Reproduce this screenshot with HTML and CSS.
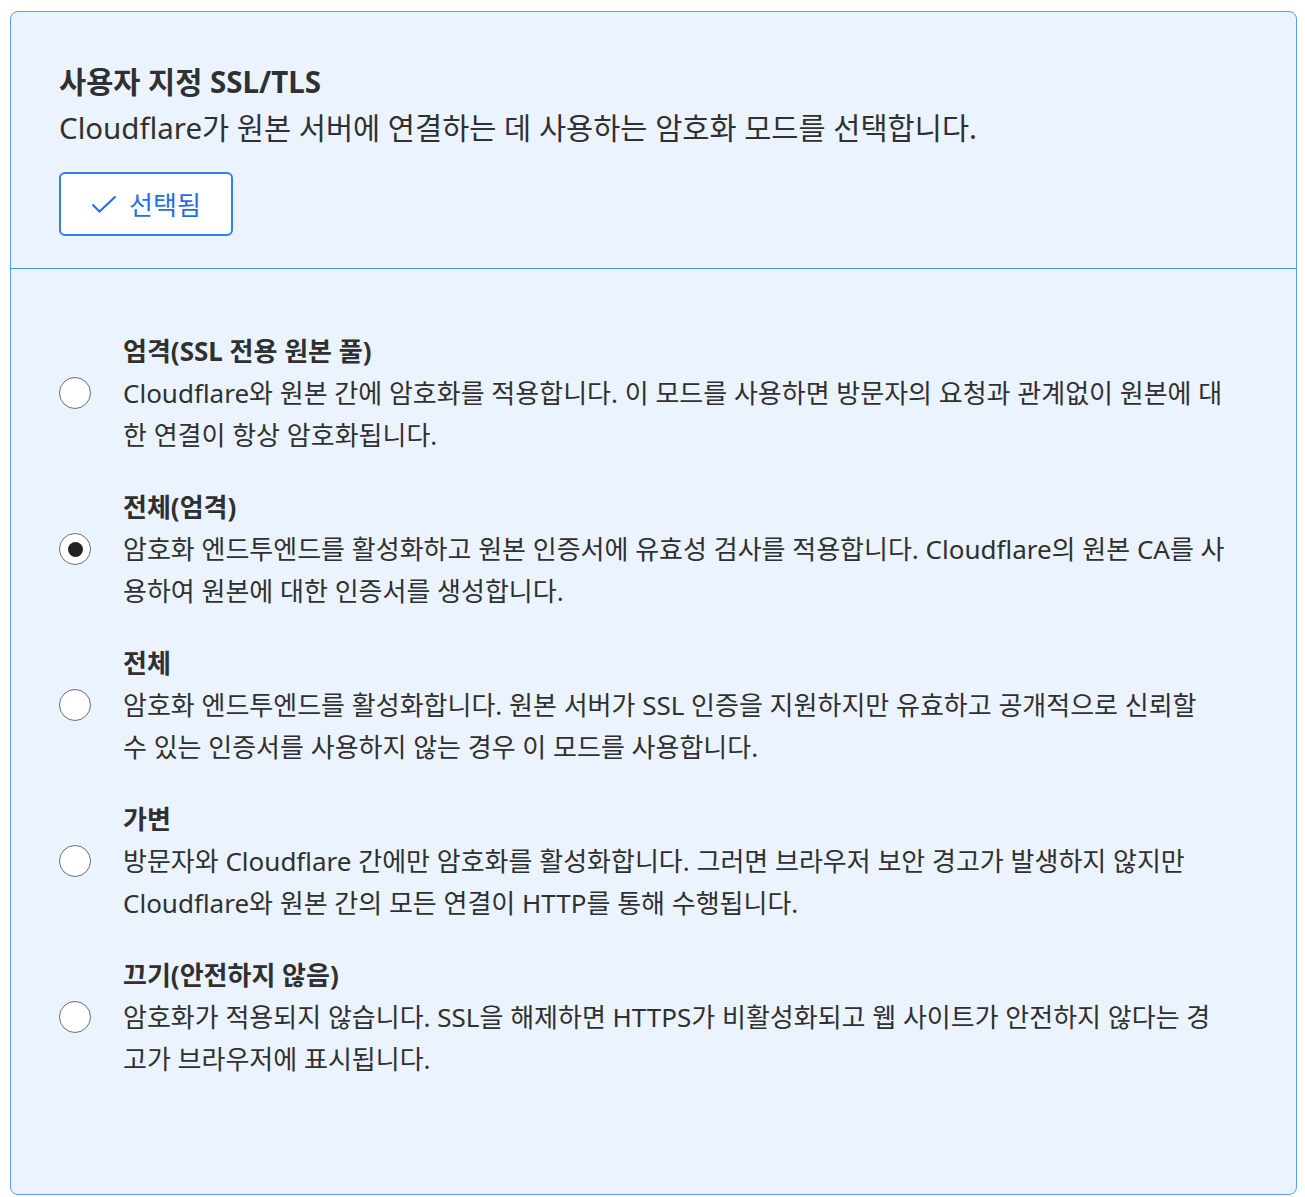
FILE: index.html
```html
<!DOCTYPE html>
<html lang="ko">
<head>
<meta charset="utf-8">
<link rel="stylesheet" href="styles.css">
</head>
<body>
<div class="card">
  <div class="head">
    <h2 class="title">사용자 지정 SSL/TLS</h2>
    <p class="desc">Cloudflare가 원본 서버에 연결하는 데 사용하는 암호화 모드를 선택합니다.</p>
    <button class="btn">
      <svg class="check" viewBox="0 0 26 18" width="26" height="18"><path d="M1.5 9.5 L8.5 16.5 L24.5 1.5" fill="none" stroke="currentColor" stroke-width="2"/></svg>
      <span>선택됨</span>
    </button>
  </div>
  <div class="list">
    <label class="opt">
      <span class="radio"></span>
      <span class="txt">
        <span class="otitle">엄격(SSL 전용 원본 풀)</span>
        <span class="odesc">Cloudflare와 원본 간에 암호화를 적용합니다. 이 모드를 사용하면 방문자의 요청과 관계없이 원본에 대한 연결이 항상 암호화됩니다.</span>
      </span>
    </label>
    <label class="opt">
      <span class="radio on"></span>
      <span class="txt">
        <span class="otitle">전체(엄격)</span>
        <span class="odesc">암호화 엔드투엔드를 활성화하고 원본 인증서에 유효성 검사를 적용합니다. Cloudflare의 원본 CA를 사용하여 원본에 대한 인증서를 생성합니다.</span>
      </span>
    </label>
    <label class="opt">
      <span class="radio"></span>
      <span class="txt">
        <span class="otitle">전체</span>
        <span class="odesc">암호화 엔드투엔드를 활성화합니다. 원본 서버가 SSL 인증을 지원하지만 유효하고 공개적으로 신뢰할 수 있는 인증서를 사용하지 않는 경우 이 모드를 사용합니다.</span>
      </span>
    </label>
    <label class="opt">
      <span class="radio"></span>
      <span class="txt">
        <span class="otitle">가변</span>
        <span class="odesc">방문자와 Cloudflare 간에만 암호화를 활성화합니다. 그러면 브라우저 보안 경고가 발생하지 않지만 Cloudflare와 원본 간의 모든 연결이 HTTP를 통해 수행됩니다.</span>
      </span>
    </label>
    <label class="opt">
      <span class="radio"></span>
      <span class="txt">
        <span class="otitle">끄기(안전하지 않음)</span>
        <span class="odesc">암호화가 적용되지 않습니다. SSL을 해제하면 HTTPS가 비활성화되고 웹 사이트가 안전하지 않다는 경고가 브라우저에 표시됩니다.</span>
      </span>
    </label>
  </div>
</div>
</body>
</html>
```
FILE: styles.css
```css
* { box-sizing: border-box; }
html, body { margin: 0; background: #fff; }
body {
  padding: 11px 8px 3px 10px;
  font-family: "Noto Sans", "Noto Sans CJK KR", sans-serif;
  color: #303030;
}
.card {
  border: 1px solid #5b9bf5;
  border-radius: 8px;
  background: #ebf3fe;
  overflow: hidden;
}
.head {
  padding: 47px 48px 32px 48px;
  border-bottom: 1px solid #4a8ff3;
}
.title {
  margin: 0;
  font-size: 29.5px;
  font-weight: 700;
  line-height: 46px;
  color: #303030;
}
.desc {
  margin: 0;
  font-size: 29.5px;
  line-height: 46px;
}
.btn {
  margin-top: 21px;
  height: 64px;
  width: 174px;
  display: flex;
  align-items: center;
  justify-content: center;
  gap: 12px;
  background: #fff;
  border: 2px solid #2d7ef7;
  border-radius: 6px;
  color: #1f6fe6;
  font-family: inherit;
  font-size: 26px;
  padding: 0;
}
.check { display: block; }
.list {
  padding: 61px 48px 114px 48px;
  display: flex;
  flex-direction: column;
  gap: 30px;
}
.opt {
  display: flex;
  align-items: center;
  gap: 32px;
}
.radio {
  flex: none;
  width: 32px;
  height: 32px;
  border-radius: 50%;
  border: 1.5px solid #6f6f6f;
  background: #fff;
  display: flex;
  align-items: center;
  justify-content: center;
}
.radio.on::after {
  content: "";
  width: 15px;
  height: 15px;
  border-radius: 50%;
  background: #222;
}
.txt { display: flex; flex-direction: column; }
.otitle {
  font-size: 26px;
  font-weight: 700;
  line-height: 42px;
}
.odesc {
  font-size: 26px;
  line-height: 42px;
  max-width: 1104px;
}
```
